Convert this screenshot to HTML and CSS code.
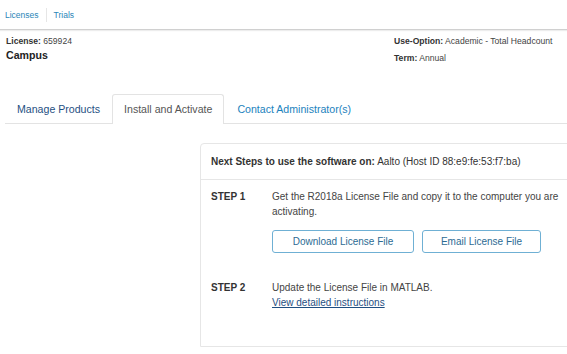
FILE: index.html
```html
<!DOCTYPE html>
<html>
<head>
<meta charset="utf-8">
<link rel="stylesheet" href="styles.css">
</head>
<body>
<div class="page">
  <nav class="topnav">
    <a class="navlink" href="#">Licenses</a>
    <span class="navsep"></span>
    <a class="navlink" href="#">Trials</a>
  </nav>
  <section class="summary">
    <div class="summary-left">
      <div class="meta"><b>License:</b> 659924</div>
      <div class="title">Campus</div>
    </div>
    <div class="summary-right">
      <div class="meta"><b>Use-Option:</b> Academic - Total Headcount</div>
      <div class="meta"><b>Term:</b> Annual</div>
    </div>
  </section>
  <div class="tabs">
    <a class="tab tab-dark" href="#">Manage Products</a>
    <a class="tab tab-active" href="#">Install and Activate</a>
    <a class="tab" href="#">Contact Administrator(s)</a>
  </div>
  <div class="content">
    <div class="panel">
      <div class="panel-head"><b>Next Steps to use the software on:</b> Aalto (Host ID 88:e9:fe:53:f7:ba)</div>
      <div class="panel-body">
        <div class="step">
          <div class="step-label">STEP 1</div>
          <div class="step-text">
            <p>Get the R2018a License File and copy it to the computer you are activating.</p>
            <div class="buttons">
              <button class="btn btn-download">Download License File</button>
              <button class="btn btn-email">Email License File</button>
            </div>
          </div>
        </div>
        <div class="step step2">
          <div class="step-label">STEP 2</div>
          <div class="step-text">
            <p>Update the License File in MATLAB.</p>
            <a class="link" href="#">View detailed instructions</a>
          </div>
        </div>
      </div>
    </div>
  </div>
</div>
</body>
</html>
```

FILE: styles.css
```css
html, body {
  margin: 0;
  padding: 0;
  background: #fff;
  overflow: hidden;
}
body {
  font-family: "Liberation Sans", Arial, sans-serif;
  color: #333;
}
.page {
  width: 567px;
  height: 354px;
  overflow: hidden;
}
.topnav {
  height: 29px;
  display: flex;
  align-items: center;
  padding-left: 5px;
  border-bottom: 1px solid #d0d0d0;
  box-shadow: 0 1px 1px rgba(0,0,0,0.07);
}
.navlink {
  font-size: 8.5px;
  color: #2a86b8;
  text-decoration: none;
}
.navsep {
  width: 1px;
  height: 14px;
  background: #e6e6e6;
  margin: 0 7px 0 7px;
}
.summary {
  display: flex;
  justify-content: space-between;
  padding: 5px 0 0 6px;
  height: 51px;
}
.summary-left .meta {
  line-height: 12px;
}
.meta {
  font-size: 8.6px;
  color: #444;
  line-height: 17px;
}
.meta b {
  color: #333;
}
.summary-right {
  width: 173px;
  margin-top: -2px;
}
.title {
  font-size: 10.6px;
  font-weight: bold;
  color: #222;
  line-height: 14px;
  margin-top: 1px;
}
.tabs {
  display: flex;
  margin: 8px 0 0 5px;
  border-bottom: 1px solid #e3e3e3;
  height: 29px;
}
.tab {
  font-size: 10.6px;
  line-height: 28px;
  padding: 0 11px;
  color: #1b82bd;
  text-decoration: none;
  border: 1px solid transparent;
  border-bottom: none;
  border-radius: 3px 3px 0 0;
}
.tab-dark {
  color: #1f4f82;
}
.tab-active {
  color: #555;
  border-color: #e3e3e3;
  background: #fff;
  height: 29px;
  margin-bottom: -1px;
  padding: 0 11px;
  margin-right: 1px;
}
.content {
  padding: 19px 0 0 200px;
}
.panel {
  width: 420px;
  height: 202px;
  border: 1px solid #e6e6e6;
  border-radius: 4px 0 0 0;
}
.panel-head {
  font-size: 10px;
  color: #333;
  height: 35px;
  line-height: 35px;
  padding-left: 10px;
  border-bottom: 1px solid #e6e6e6;
}
.panel-body {
  padding: 9px 0 0 10px;
}
.step {
  display: flex;
  font-size: 10px;
  line-height: 15px;
}
.step-label {
  width: 61px;
  font-weight: bold;
  color: #333;
}
.step-text {
  width: 296px;
  color: #444;
}
.step-text p {
  margin: 0;
}
.buttons {
  display: flex;
  gap: 8px;
  margin-top: 11px;
}
.btn {
  font-family: "Liberation Sans", Arial, sans-serif;
  font-size: 10px;
  color: #2c6b93;
  background: #fff;
  border: 1px solid #6fb0d4;
  border-radius: 3px;
  height: 23px;
  padding: 0;
}
.btn-download {
  width: 142px;
}
.btn-email {
  width: 119px;
}
.step2 {
  margin-top: 27px;
}
.link {
  color: #1f4f82;
  text-decoration: underline;
}
```
